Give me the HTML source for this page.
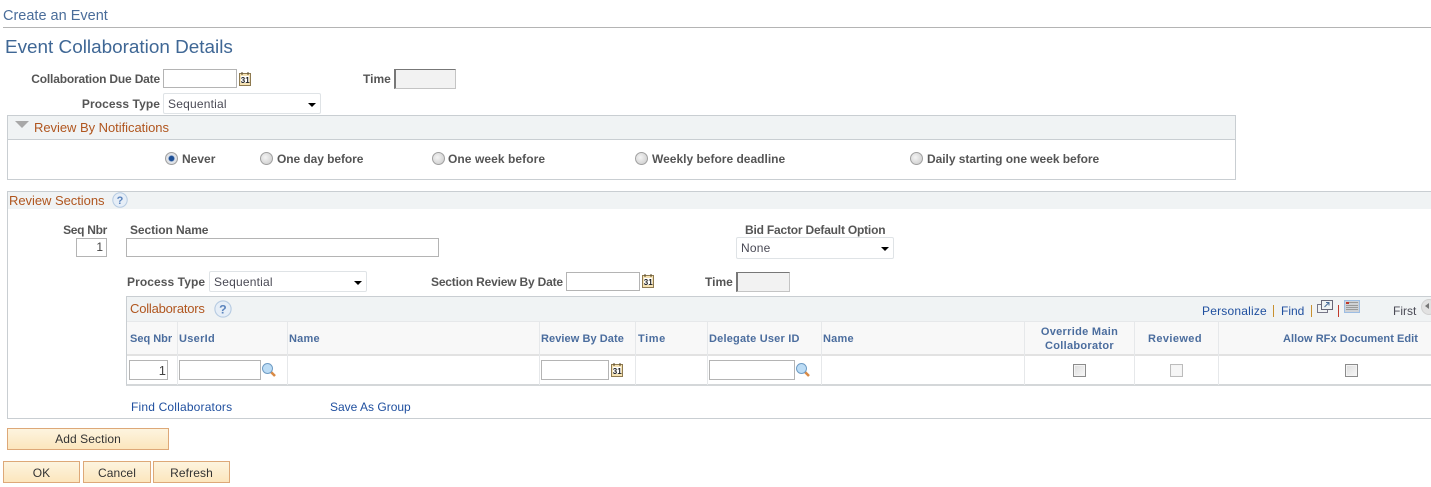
<!DOCTYPE html>
<html><head><meta charset="utf-8"><style>
html,body{margin:0;padding:0;background:#fff;width:1431px;height:487px;overflow:hidden}
body{position:relative;font-family:"Liberation Sans",Arial,sans-serif;font-size:12px;color:#4d4d4d}
.a{position:absolute;box-sizing:border-box}
.t{position:absolute;white-space:nowrap;line-height:14px}
.l{position:absolute;white-space:nowrap;line-height:14px;font-weight:bold;color:#555}
.h{position:absolute;white-space:nowrap;line-height:14px;font-weight:bold;color:#4b6d9e;font-size:11px;margin-top:1px}
.s{position:absolute;white-space:nowrap;line-height:14px;color:#b0561f;font-size:13px}
.k{position:absolute;white-space:nowrap;line-height:14px;color:#1f4f9f}
.i{position:absolute;box-sizing:border-box;border:1px solid #b4b4b4;background:#fff;line-height:17px;text-align:right;padding-right:3px;color:#444}
.d{position:absolute;box-sizing:border-box;border:1px solid #c4c4c4;border-top:1px solid #777;border-left:2px solid #777;background:#f2f2f2}
.e{position:absolute;box-sizing:border-box;border:1px solid #dfe3e6;border-radius:2px;background:#fff;padding-left:4px;line-height:20px;color:#4a4a55;letter-spacing:.2px}
.e:after{content:"";position:absolute;right:4px;top:9px;border-left:4px solid transparent;border-right:4px solid transparent;border-top:4px solid #000}
.b{position:absolute;box-sizing:border-box;border:1px solid #dda878;background:linear-gradient(#fdf4df,#fce6bd);text-align:center;line-height:20px;color:#333;height:22px;letter-spacing:.1px}
.v{position:absolute;width:1px;background:#e6e8ea}
.r{position:absolute;width:13px;height:13px;border-radius:50%;border:1px solid #a0a0a0;box-sizing:border-box;background:radial-gradient(circle at 40% 40%,#f4f4f4,#c8c8c8)}
.c{position:absolute;width:13px;height:13px;box-sizing:border-box;border:1px solid #8c8c8c;background:linear-gradient(135deg,#dcdcdc,#f8f8f8);box-shadow:inset 0 0 0 1px #f4f4f4}
svg{position:absolute;overflow:visible}
</style></head><body>

<div class="t" style="left:3px;top:8px;font-size:14.5px;line-height:16px;color:#4a6d9a">Create an Event</div>
<div class="a" style="left:3px;top:27px;width:1428px;height:1px;background:#b4b4b4"></div>
<div class="t" style="left:5px;top:37px;font-size:18.9px;line-height:21px;color:#3f6795">Event Collaboration Details</div>

<div class="l" style="right:1271px;top:72px;letter-spacing:-.18px">Collaboration Due Date</div>
<div class="i" style="left:163px;top:69px;width:74px;height:19px"></div>
<svg style="left:239px;top:72px" width="13" height="14" viewBox="0 0 13 14"><rect x=".5" y="1.5" width="11" height="12" fill="#f6e3b4" stroke="#8e7a50"/><rect x="2" y="4" width="8" height="7" fill="#fff"/><path d="M3 0v3M9 0v3" stroke="#5a4a2a"/><text x="1.8" y="10.8" font-size="8" font-weight="bold" font-family="Liberation Sans" fill="#222">31</text></svg>
<div class="l" style="left:363px;top:72px">Time</div>
<div class="d" style="left:394px;top:69px;width:62px;height:20px"></div>

<div class="l" style="right:1271px;top:97px;letter-spacing:.08px">Process Type</div>
<div class="e" style="left:163px;top:93px;width:158px;height:21px">Sequential</div>

<div class="a" style="left:7px;top:115px;width:1229px;height:65px;border:1px solid #c9ced2"></div>
<div class="a" style="left:7px;top:115px;width:1229px;height:25px;background:#f0f3f4;border:1px solid #c9ced2"></div>
<div class="a" style="left:15px;top:121px;border-left:7px solid transparent;border-right:7px solid transparent;border-top:7px solid #a8a8a8"></div>
<div class="s" style="left:34px;top:121px;letter-spacing:-.04px">Review By Notifications</div>

<div class="r" style="left:165px;top:152px;background:radial-gradient(circle,#1d4f96 0,#1d4f96 30%,#e4e8ee 45%,#cfcfcf 100%)"></div>
<div class="l" style="left:182px;top:152px">Never</div>
<div class="r" style="left:260px;top:152px"></div>
<div class="l" style="left:277px;top:152px;letter-spacing:-.07px">One day before</div>
<div class="r" style="left:432px;top:152px"></div>
<div class="l" style="left:448px;top:152px;letter-spacing:.07px">One week before</div>
<div class="r" style="left:635px;top:152px"></div>
<div class="l" style="left:652px;top:152px">Weekly before deadline</div>
<div class="r" style="left:910px;top:152px"></div>
<div class="l" style="left:927px;top:152px;letter-spacing:-.04px">Daily starting one week before</div>

<div class="a" style="left:7px;top:191px;width:1424px;height:228px;border:1px solid #c9ced2;border-right:none"></div>
<div class="a" style="left:8px;top:192px;width:1423px;height:17px;background:#f0f3f4"></div>
<div class="s" style="left:9px;top:194px;letter-spacing:-.04px">Review Sections</div>
<svg style="left:112px;top:192px" width="16" height="16" viewBox="0 0 16 16"><circle cx="8" cy="8" r="7.2" fill="#e6eef7" stroke="#b6cbe2"/><text x="4.6" y="12" font-size="11" font-weight="bold" font-family="Liberation Sans" fill="#5b84bd">?</text></svg>

<div class="l" style="right:1324px;top:223px;letter-spacing:-.3px">Seq Nbr</div>
<div class="i" style="left:76px;top:238px;width:31px;height:19px">1</div>
<div class="l" style="left:130px;top:223px;letter-spacing:-.08px">Section Name</div>
<div class="i" style="left:126px;top:238px;width:313px;height:19px"></div>
<div class="l" style="left:745px;top:223px;letter-spacing:-.2px">Bid Factor Default Option</div>
<div class="e" style="left:736px;top:237px;width:158px;height:22px">None</div>

<div class="l" style="left:127px;top:275px;letter-spacing:.08px">Process Type</div>
<div class="e" style="left:209px;top:271px;width:158px;height:21px">Sequential</div>
<div class="l" style="left:431px;top:275px;letter-spacing:-.19px">Section Review By Date</div>
<div class="i" style="left:566px;top:272px;width:74px;height:19px"></div>
<svg style="left:642px;top:274px" width="13" height="14" viewBox="0 0 13 14"><rect x=".5" y="1.5" width="11" height="12" fill="#f6e3b4" stroke="#8e7a50"/><rect x="2" y="4" width="8" height="7" fill="#fff"/><path d="M3 0v3M9 0v3" stroke="#5a4a2a"/><text x="1.8" y="10.8" font-size="8" font-weight="bold" font-family="Liberation Sans" fill="#222">31</text></svg>
<div class="l" style="left:705px;top:275px">Time</div>
<div class="d" style="left:736px;top:272px;width:54px;height:20px"></div>

<div class="a" style="left:126px;top:296px;width:1305px;height:90px;border:1px solid #c9ced2;border-right:none;border-bottom:2px solid #d4d7d9"></div>
<div class="a" style="left:127px;top:297px;width:1304px;height:24px;background:#f0f3f4"></div>
<div class="a" style="left:127px;top:321px;width:1304px;height:33px;background:#f8f8f8;border-top:1px solid #e6e8ea"></div>
<div class="a" style="left:127px;top:354px;width:1304px;height:2px;background:#e2e2e2"></div>
<div class="s" style="left:130px;top:302px;letter-spacing:-.2px">Collaborators</div>
<svg style="left:214px;top:300px" width="18" height="18" viewBox="0 0 16 16"><circle cx="8" cy="8" r="7.2" fill="#e6eef7" stroke="#b6cbe2"/><text x="4.6" y="12" font-size="11" font-weight="bold" font-family="Liberation Sans" fill="#5b84bd">?</text></svg>

<div class="k" style="left:1202px;top:304px;letter-spacing:.2px">Personalize</div>
<div class="a" style="left:1273px;top:305px;width:1px;height:12px;background:#c8902e"></div>
<div class="k" style="left:1281px;top:304px">Find</div>
<div class="a" style="left:1311px;top:305px;width:1px;height:12px;background:#c8902e"></div>
<svg style="left:1317px;top:300px" width="16" height="14" viewBox="0 0 16 14"><rect x=".5" y="4.5" width="10" height="8" fill="#f0f3f4" stroke="#778"/><rect x="4.5" y=".5" width="11" height="9" fill="#f0f3f4" stroke="#667"/><path d="M7.500 7L12 2.500M9 2.500h3v3" fill="none" stroke="#4a6d9a"/></svg>
<div class="a" style="left:1338px;top:305px;width:1px;height:12px;background:#c0392b"></div>
<svg style="left:1344px;top:300px" width="16" height="13" viewBox="0 0 16 13"><rect x=".5" y=".5" width="15" height="12" fill="#cfd2d6" stroke="#9dbde3"/><rect x="2" y="2" width="3" height="2" fill="#c0392b"/><path d="M5 2.500h9M2 5.500h12M2 7.500h12M2 9.500h12" stroke="#9a9a9a"/></svg>
<div class="t" style="left:1393px;top:304px;color:#4a4a55">First</div>
<div class="a" style="left:1421px;top:299px;width:16px;height:16px;border-radius:50%;background:#e2e2e2;border:1px solid #d0d0d0"></div>
<div class="a" style="left:1425px;top:303px;border-top:3px solid transparent;border-bottom:3px solid transparent;border-right:4px solid #777"></div>

<div class="v" style="left:177px;top:322px;height:63px"></div>
<div class="v" style="left:287px;top:322px;height:63px"></div>
<div class="v" style="left:539px;top:322px;height:63px"></div>
<div class="v" style="left:635px;top:322px;height:63px"></div>
<div class="v" style="left:707px;top:322px;height:63px"></div>
<div class="v" style="left:821px;top:322px;height:63px"></div>
<div class="v" style="left:1024px;top:322px;height:63px"></div>
<div class="v" style="left:1134px;top:322px;height:63px"></div>
<div class="v" style="left:1218px;top:322px;height:63px"></div>

<div class="h" style="left:130px;top:331px">Seq Nbr</div>
<div class="h" style="left:179px;top:331px;letter-spacing:.3px">UserId</div>
<div class="h" style="left:289px;top:331px;letter-spacing:.2px">Name</div>
<div class="h" style="left:541px;top:331px;letter-spacing:.07px">Review By Date</div>
<div class="h" style="left:638px;top:331px;letter-spacing:.6px">Time</div>
<div class="h" style="left:709px;top:331px;letter-spacing:.2px">Delegate User ID</div>
<div class="h" style="left:823px;top:331px;letter-spacing:.2px">Name</div>
<div class="h" style="left:1025px;top:324px;width:109px;text-align:center;letter-spacing:.3px">Override Main<br>Collaborator</div>
<div class="h" style="left:1148px;top:331px;letter-spacing:.4px">Reviewed</div>
<div class="h" style="left:1283px;top:331px;letter-spacing:.05px">Allow RFx Document Edit</div>

<div class="i" style="left:129px;top:360px;width:39px;height:20px;padding-right:1px;line-height:19px;font-size:13px">1</div>
<div class="i" style="left:179px;top:360px;width:82px;height:20px"></div>
<svg style="left:262px;top:363px" width="14" height="14" viewBox="0 0 14 14"><path d="M8.500 8.500L13 13" stroke="#d98a45" stroke-width="2.600"/><circle cx="5.500" cy="5.500" r="5" fill="#bcdcf5" stroke="#6f9cc4"/></svg>
<div class="i" style="left:541px;top:360px;width:68px;height:20px"></div>
<svg style="left:611px;top:363px" width="13" height="14" viewBox="0 0 13 14"><rect x=".5" y="1.500" width="11" height="12" fill="#f6e3b4" stroke="#8e7a50"/><rect x="2" y="4" width="8" height="7" fill="#fff"/><path d="M3 0v3M9 0v3" stroke="#5a4a2a"/><text x="1.800" y="10.800" font-size="8" font-weight="bold" font-family="Liberation Sans" fill="#222">31</text></svg>
<div class="i" style="left:709px;top:360px;width:86px;height:20px"></div>
<svg style="left:796px;top:363px" width="14" height="14" viewBox="0 0 14 14"><path d="M8.500 8.500L13 13" stroke="#d98a45" stroke-width="2.600"/><circle cx="5.500" cy="5.500" r="5" fill="#bcdcf5" stroke="#6f9cc4"/></svg>
<div class="c" style="left:1073px;top:364px"></div>
<div class="c" style="left:1170px;top:364px;border-color:#bcbcbc;background:#f6f6f6"></div>
<div class="c" style="left:1345px;top:364px"></div>

<div class="k" style="left:131px;top:400px;letter-spacing:.18px">Find Collaborators</div>
<div class="k" style="left:330px;top:400px">Save As Group</div>

<div class="b" style="left:7px;top:428px;width:162px">Add Section</div>
<div class="b" style="left:3px;top:461px;width:77px;line-height:22px">OK</div>
<div class="b" style="left:83px;top:461px;width:68px;line-height:22px">Cancel</div>
<div class="b" style="left:153px;top:461px;width:77px;line-height:22px">Refresh</div>
</body></html>
